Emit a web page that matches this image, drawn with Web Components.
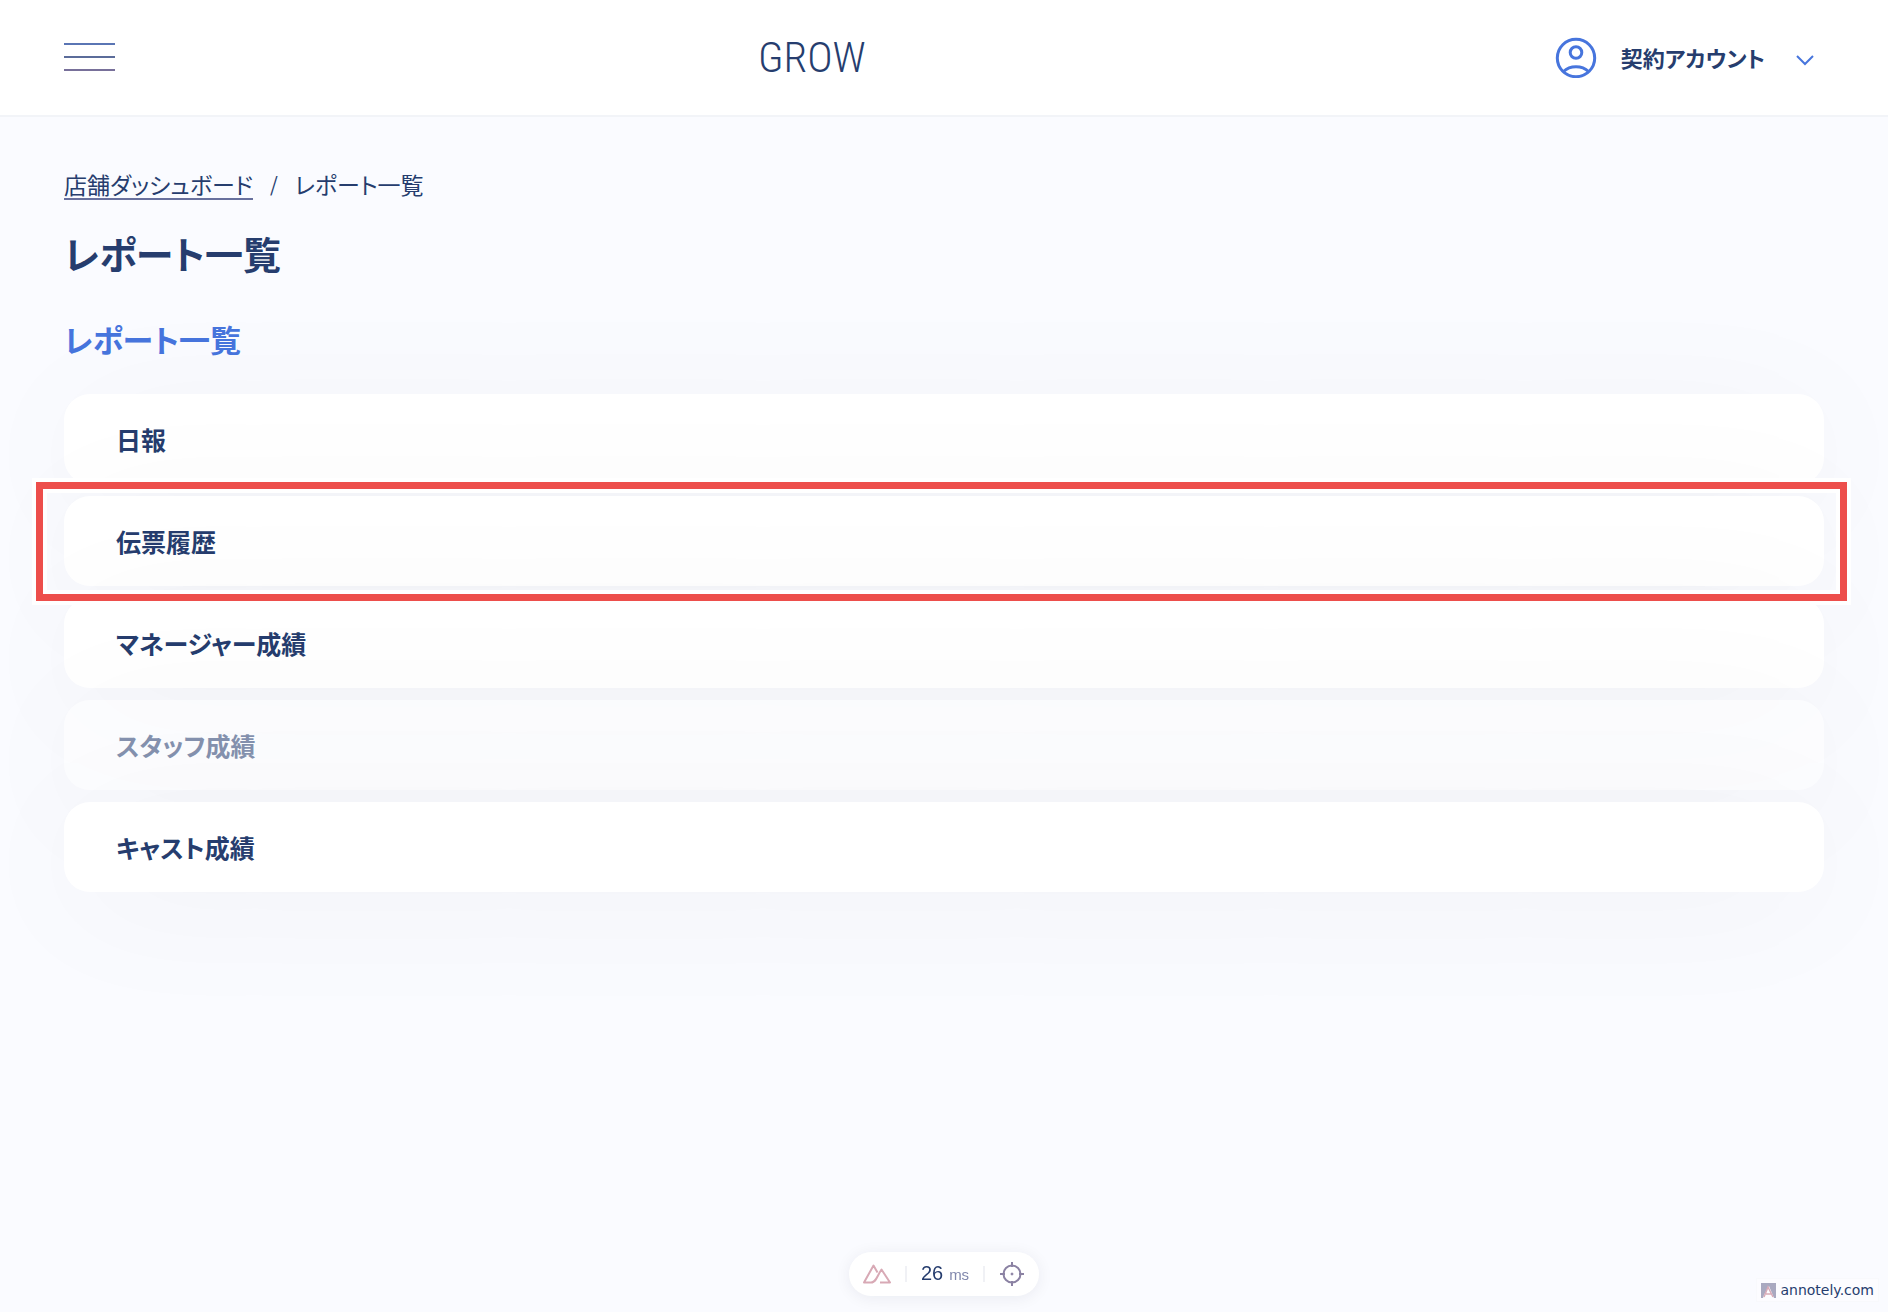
<!DOCTYPE html>
<html lang="ja">
<head>
<meta charset="utf-8">
<meta name="viewport" content="width=device-width, initial-scale=1">
<title>レポート一覧 | GROW</title>
<style>
:root{--navy:#263d6e;--blue:#4775dd;--bg:#fafbff;--line:#f2f4f8}
*{box-sizing:border-box}
body{margin:0;background:var(--bg);color:var(--navy);font-family:"Noto Sans CJK JP","Noto Sans",sans-serif;font-feature-settings:"palt"}
</style>
</head>
<body>
<grow-app></grow-app>
<script>
function define(name, html) {
  const template = document.createElement('template');
  template.innerHTML = '<style>*,*::before,*::after{box-sizing:border-box}button,a{font:inherit;font-feature-settings:inherit;color:inherit}button{border:0;padding:0;background:none;cursor:pointer}svg{display:block;fill:none;stroke:currentColor}</style>' + html;
  customElements.define(name, class extends HTMLElement {
    constructor() {
      super();
      this.attachShadow({ mode: 'open' }).append(template.content.cloneNode(true));
    }
  });
}

define('menu-button', `
<style>
:host{display:block}
button{display:flex;flex-direction:column;gap:11px;width:51px}
span{height:2px;background:#5b6c9a}
span:first-child{background:#5a75b4}
span:last-child{background:#78709a}
</style>
<button type="button" aria-label="メニュー"><span></span><span></span><span></span></button>`);

define('account-menu', `
<style>
:host{display:block;padding:0 10px 0 46px}
button{display:flex;align-items:center;font-size:22px;font-weight:600;line-height:32px}
.user{color:var(--blue);margin-right:24px}
.chevron{color:var(--blue);margin:6px 0 0 31px}
</style>
<button type="button" aria-haspopup="menu">
<svg class="user" width="42" height="42" viewBox="0 0 42 42" stroke-width="3"><circle cx="21" cy="22" r="18.700"/><circle cx="21" cy="16.500" r="5.800"/><path d="M8.500 35.500C15 29 27 29 33.500 35.500"/></svg>
<slot></slot>
<svg class="chevron" width="18" height="12" viewBox="0 0 18 12" stroke-width="2"><path d="M1 2l8 8 8-8"/></svg>
</button>`);

define('app-header', `
<style>
:host{display:block;background:#fff;border-bottom:2px solid var(--line)}
header{display:flex;align-items:center;justify-content:space-between;height:115px;padding:0 64px 2px}
.logo{font-family:"Roboto Condensed","Roboto",sans-serif;font-weight:300;font-size:43px;line-height:56px;text-decoration:none}
</style>
<header><menu-button></menu-button><a class="logo" href="#">GROW</a><account-menu>契約アカウント</account-menu></header>`);

define('bread-crumbs', `
<style>
:host{display:block;font-size:23px;line-height:28px}
nav{display:flex;gap:17px}
a{text-decoration:none;border-bottom:2px solid #68709d}
.sep{font-size:20px}
</style>
<nav aria-label="パンくず"><a href="#">店舗ダッシュボード</a><span class="sep">/</span><span>レポート一覧</span></nav>`);

define('report-item', `
<style>
:host{display:block;position:relative;border-radius:26px;background:#fff;box-shadow:0 16px 140px rgba(20,30,60,.04)}
:host([disabled]){opacity:.55}
a{display:block;padding:27px 52px;font-size:25px;line-height:36px;font-weight:600;text-decoration:none}
</style>
<a href="#"><slot></slot></a><slot name="mark"></slot>`);

define('highlight-frame', `
<style>
:host{position:absolute;z-index:2;inset:-18px -27px -19px -32px;border:4px solid #fff;pointer-events:none}
div{height:100%;border:7px solid #ed4e4b}
div::after{content:"";display:block;height:100%;border:4px solid #fff}
</style>
<div></div>`);

define('timing-bar', `
<style>
:host{position:fixed;left:0;right:0;bottom:16px;display:flex;justify-content:center}
div{display:flex;align-items:center;width:190px;height:44px;padding:0 14px;justify-content:space-between;border-radius:22px;background:#fff;box-shadow:0 2px 16px rgba(20,30,60,.07);font-family:"Liberation Sans",sans-serif;font-size:20px;line-height:20px}
i{width:2px;height:16px;background:#f0f1f5}
span{display:flex;align-items:baseline;gap:6px}
small{font-size:15px;color:#8188ad}
.nuxt{color:#d8a9b5}
.inspect{color:#8b82a3}
</style>
<div>
<button class="nuxt" type="button" aria-label="Nuxt"><svg width="28" height="20" viewBox="0 0 28 20" stroke-width="2" stroke-linejoin="round"><path d="M10 18.500H1L10.500 1.500 14.500 8.500M8 18.500C13 18.500 13.500 13 18.500 5.500L27 18.500H17"/></svg></button>
<i></i><span>26 <small>ms</small></span><i></i>
<button class="inspect" type="button" aria-label="Inspect"><svg width="26" height="26" viewBox="0 0 26 26" stroke-width="2"><circle cx="13" cy="13" r="8.500"/><circle cx="13" cy="13" r="1" fill="currentColor" stroke-width="1"/><path d="M13 1v5M13 20v5M1 13h5M20 13h5"/></svg></button>
</div>`);

define('credit-badge', `
<style>
:host{position:fixed;right:9px;bottom:10px;display:block}
a{display:flex;align-items:center;gap:4px;padding:0 4px;height:24px;background:#fcfcff;border:1px solid #f8f9fc;font-family:"DejaVu Sans",sans-serif;font-size:14px;text-decoration:none}
svg{stroke:none}
.mark{stroke:#d8aab7;stroke-width:1.5}
</style>
<a href="#"><svg width="15" height="15" viewBox="0 0 15 15"><path fill="#a9a9c0" d="M0 0h15v15H13L8 3 3 12 2 15H0z"/><path class="mark" d="M3 14L7 4l5 10M5 11h5"/></svg>annotely.com</a>`);

define('grow-app', `
<style>
:host{display:block;min-height:100vh}
main{padding:53px 64px}
h1,h2{margin:0;font-weight:600}
h1{margin-top:25px;font-size:38px;line-height:56px}
h2{margin:34px 0 31px;font-size:31px;line-height:48px;color:var(--blue)}
ul{display:flex;flex-direction:column;gap:12px;margin:0;padding:0;list-style:none}
</style>
<app-header></app-header>
<main>
<bread-crumbs></bread-crumbs>
<h1>レポート一覧</h1>
<h2>レポート一覧</h2>
<ul>
<li><report-item>日報</report-item></li>
<li><report-item>伝票履歴<highlight-frame slot="mark"></highlight-frame></report-item></li>
<li><report-item>マネージャー成績</report-item></li>
<li><report-item disabled>スタッフ成績</report-item></li>
<li><report-item>キャスト成績</report-item></li>
</ul>
</main>
<timing-bar></timing-bar>
<credit-badge></credit-badge>`);
</script>
</body>
</html>
